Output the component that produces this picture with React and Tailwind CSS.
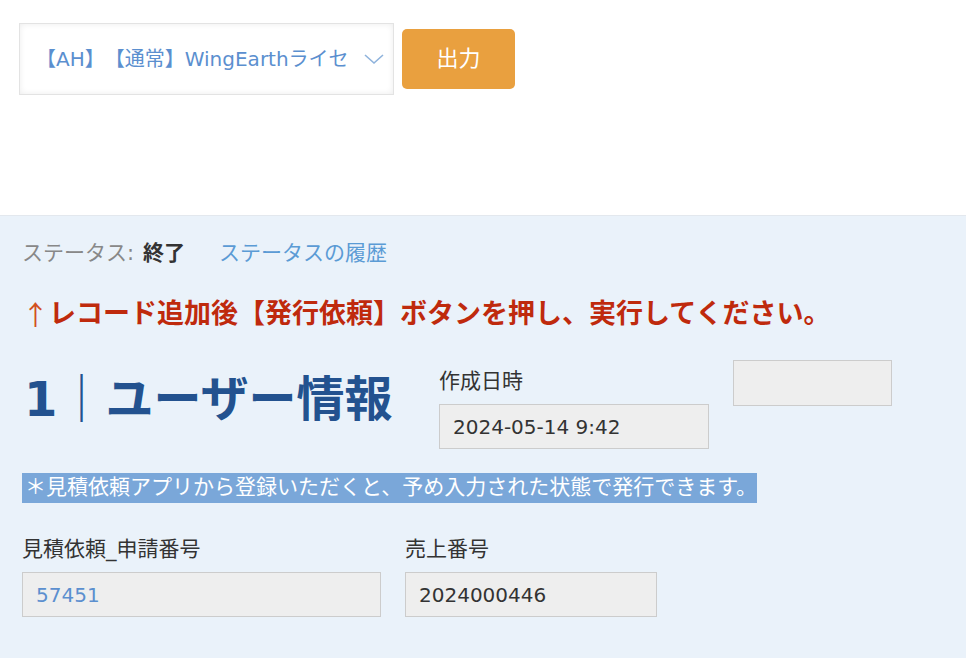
import React from 'react';

const font = { fontFamily: '"DejaVu Sans", "Noto Sans CJK JP", sans-serif' };
const cjk = { fontFamily: '"Noto Sans CJK JP", sans-serif' };

const ChevronDown = () => (
  <svg width="22" height="12" viewBox="0 0 22 12" fill="none">
    <path d="M2 2l9 8 9-8" stroke="#8fb3dc" strokeWidth="1.6" />
  </svg>
);

const Field = ({ label, value, width, valueClass = 'text-[#333333]' }) => (
  <div className="flex flex-col">
    <label className="text-[21px] leading-[28px] text-[#333333] mb-[9px]">{label}</label>
    <div
      className={`h-[45px] border border-[#cccccc] bg-[#eeeeee] px-[13px] flex items-center text-[20px] ${valueClass}`}
      style={{ width }}
    >
      {value}
    </div>
  </div>
);

const App = () => {
  return (
    <div className="w-[966px] h-[658px] overflow-hidden bg-white [text-spacing-trim:space-all]" style={font}>
      {/* toolbar */}
      <div className="h-[216px] pt-[23px] pl-[19px] flex items-start gap-[8px] border-b border-[#e3e8ee]">
        <div className="w-[375px] h-[72px] border border-[#e3e3e3] bg-white shadow-[inset_0_0_6px_rgba(0,0,0,0.08)] flex items-center pl-[16px] pr-[8px]">
          <span className="w-[324px] whitespace-nowrap overflow-hidden text-[20px] text-[#5b8fcf]">
            【AH】【通常】WingEarthライセ
          </span>
          <span className="ml-[4px] flex items-center">
            <ChevronDown />
          </span>
        </div>
        <button className="mt-[6px] w-[113px] h-[60px] pb-[5px] rounded-[5px] bg-[#e9a03f] text-white text-[22px]" style={cjk}>
          出力
        </button>
      </div>

      {/* record body */}
      <div className="bg-[#eaf2fa] h-[442px] pl-[22px] pt-[23px]">
        <div className="flex items-center h-[30px] text-[21px]">
          <span className="text-[#888888]">ステータス:</span>
          <span className="ml-[9px] font-bold text-[#333333]">終了</span>
          <span className="ml-[34px] text-[#5b9bd5]">ステータスの履歴</span>
        </div>

        <div className="mt-[27px] h-[36px] flex items-center text-[27px] font-bold text-[#bf2a0d] whitespace-nowrap">
          <span className="font-normal text-[#d2501e]" style={cjk}>↑</span>
          <span>レコード追加後【発行依頼】ボタンを押し、実行してください。</span>
        </div>

        <div className="mt-[28px] flex items-start">
          <h1 className="mt-[9px] w-[417px] pl-[2px] text-[48px] leading-[60px] font-bold text-[#23528f] whitespace-nowrap">
            1｜ユーザー情報
          </h1>
          <div className="mt-[7px]">
            <Field label="作成日時" value="2024-05-14 9:42" width={270} />
          </div>
          <div className="ml-[24px] w-[159px] h-[46px] border border-[#cccccc] bg-[#eeeeee]" />
        </div>

        <div className="mt-[24px] inline-flex items-center h-[30px] bg-[#7aa7d9] text-white text-[21px] pl-[3px] pr-0 whitespace-nowrap">
          ＊見積依頼アプリから登録いただくと、予め入力された状態で発行できます。
        </div>

        <div className="mt-[32px] flex gap-[24px]">
          <Field label="見積依頼_申請番号" value="57451" width={359} valueClass="text-[#5b8fcf]" />
          <Field label="売上番号" value="2024000446" width={252} />
        </div>
      </div>
    </div>
  );
};

export default App;
